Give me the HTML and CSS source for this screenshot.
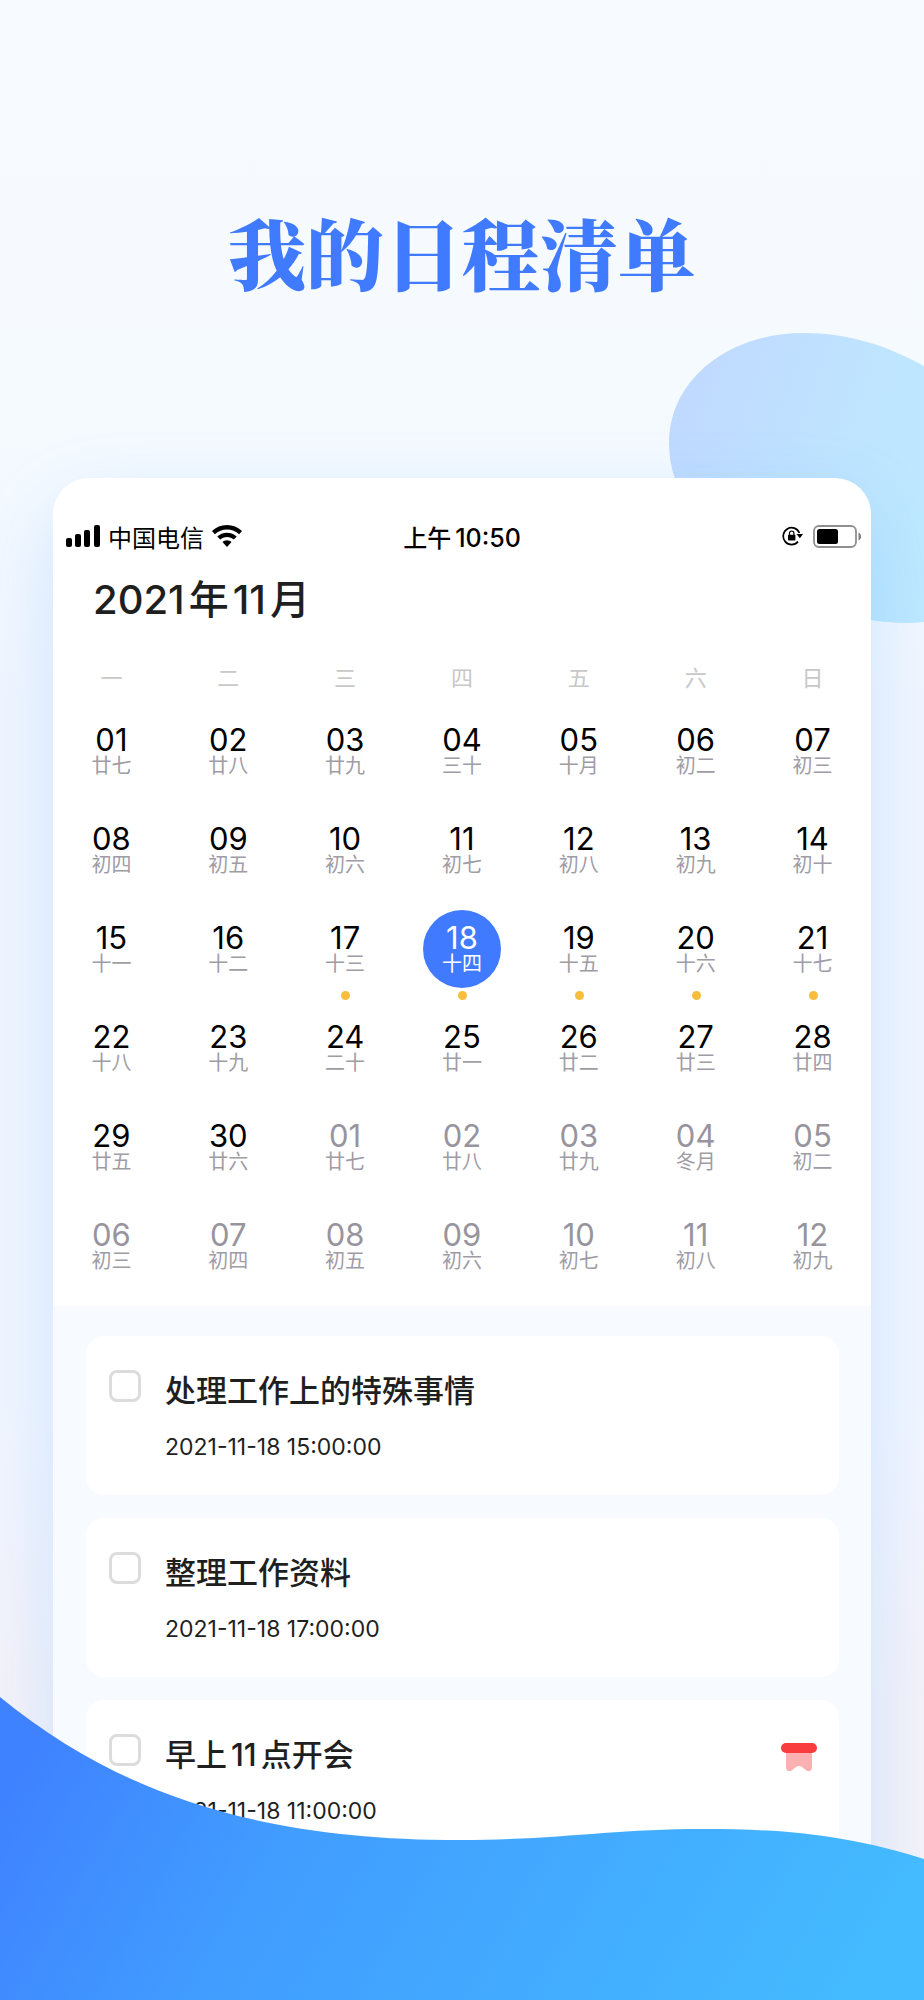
FILE: index.html
```html
<!DOCTYPE html>
<html lang="zh-CN">
<head>
<meta charset="utf-8">
<meta name="viewport" content="width=device-width, initial-scale=1">
<title>我的日程清单</title>
<link rel="stylesheet" href="styles.css">
</head>
<body>
<main class="page">
  <svg class="blob" viewBox="0 0 255 292" aria-hidden="true">
    <defs>
      <linearGradient id="blobFill" x1="0" y1="0.3" x2="1" y2="0.7">
        <stop offset="0" stop-color="#c0d9ff"/>
        <stop offset="0.600" stop-color="#bfe4ff"/>
        <stop offset="1" stop-color="#bee8ff"/>
      </linearGradient>
    </defs>
    <path fill="url(#blobFill)" d="M0 110C0 45 62 0 134 0C180 0 216 12 255 33V289C150 300 0 215 0 110Z"/>
  </svg>

  <h1 class="headline">我的日程清单</h1>

  <section class="phone">
    <div class="status">
      <div class="status-left">
        <svg width="34" height="22" viewBox="0 0 34 22" aria-hidden="true">
          <rect x="0" y="13" width="6" height="9" rx="2"/>
          <rect x="9" y="9" width="6" height="13" rx="2"/>
          <rect x="18" y="5" width="6" height="17" rx="2"/>
          <rect x="28" y="0" width="6" height="22" rx="2"/>
        </svg>
        <span>中国电信</span>
        <svg width="30" height="22" viewBox="0 0 30 22" aria-hidden="true">
          <path d="M15 0C20.800 0 26 2.200 30 6.100L27.200 9.300C23.900 6.200 19.600 4.400 15 4.400S6.100 6.200 2.800 9.300L0 6.100C4 2.200 9.200 0 15 0Z"/>
          <path d="M15 7.700C18.700 7.700 22.100 9.100 24.700 11.500L21.800 14.600C20 13 17.600 12 15 12S10 13 8.200 14.600L5.300 11.500C7.900 9.100 11.300 7.700 15 7.700Z"/>
          <path d="M15 15.300C16.700 15.300 18.300 16 19.500 17.100L15 22L10.500 17.100C11.700 16 13.300 15.300 15 15.300Z"/>
        </svg>
      </div>
      <time class="clock"><span>上午</span><span class="digits">10:50</span></time>
      <div class="status-right">
        <svg width="21" height="20" viewBox="0 0 21 20" aria-hidden="true">
          <path d="M17.400 7A8.400 8.400 0 1 0 16 15.600" fill="none" stroke="#000" stroke-width="1.700"/>
          <path d="M14.500 8H21L17.900 12.200Z"/>
          <rect x="6" y="8.800" width="7.400" height="5.800" rx="0.800"/>
          <path d="M7.500 9V7.200a2.200 2.200 0 0 1 4.400 0V9" fill="none" stroke="#000" stroke-width="1.200"/>
        </svg>
        <svg width="48" height="23" viewBox="0 0 48 23" aria-hidden="true">
          <rect x="1" y="1" width="42" height="21" rx="5" fill="none" stroke="#8f8f8f" stroke-width="1.800"/>
          <rect x="4" y="4" width="21" height="15" rx="2.500"/>
          <path d="M45.500 7.500C49 9 49 14 45.500 15.500Z" fill="#808080"/>
        </svg>
      </div>
    </div>

    <h2 class="month">2021<span class="digits">年</span>11<span class="digits">月</span></h2>

    <table class="calendar">
      <thead>
        <tr><th>一</th><th>二</th><th>三</th><th>四</th><th>五</th><th>六</th><th>日</th></tr>
      </thead>
      <tbody>
        <tr>
          <td><button class="day"><b>01</b><small>廿七</small></button></td>
          <td><button class="day"><b>02</b><small>廿八</small></button></td>
          <td><button class="day"><b>03</b><small>廿九</small></button></td>
          <td><button class="day"><b>04</b><small>三十</small></button></td>
          <td><button class="day"><b>05</b><small>十月</small></button></td>
          <td><button class="day"><b>06</b><small>初二</small></button></td>
          <td><button class="day"><b>07</b><small>初三</small></button></td>
        </tr>
        <tr>
          <td><button class="day"><b>08</b><small>初四</small></button></td>
          <td><button class="day"><b>09</b><small>初五</small></button></td>
          <td><button class="day"><b>10</b><small>初六</small></button></td>
          <td><button class="day"><b>11</b><small>初七</small></button></td>
          <td><button class="day"><b>12</b><small>初八</small></button></td>
          <td><button class="day"><b>13</b><small>初九</small></button></td>
          <td><button class="day"><b>14</b><small>初十</small></button></td>
        </tr>
        <tr>
          <td><button class="day"><b>15</b><small>十一</small></button></td>
          <td><button class="day"><b>16</b><small>十二</small></button></td>
          <td><button class="day marked"><b>17</b><small>十三</small></button></td>
          <td><button class="day marked selected" aria-pressed="true"><b>18</b><small>十四</small></button></td>
          <td><button class="day marked"><b>19</b><small>十五</small></button></td>
          <td><button class="day marked"><b>20</b><small>十六</small></button></td>
          <td><button class="day marked"><b>21</b><small>十七</small></button></td>
        </tr>
        <tr>
          <td><button class="day"><b>22</b><small>十八</small></button></td>
          <td><button class="day"><b>23</b><small>十九</small></button></td>
          <td><button class="day"><b>24</b><small>二十</small></button></td>
          <td><button class="day"><b>25</b><small>廿一</small></button></td>
          <td><button class="day"><b>26</b><small>廿二</small></button></td>
          <td><button class="day"><b>27</b><small>廿三</small></button></td>
          <td><button class="day"><b>28</b><small>廿四</small></button></td>
        </tr>
        <tr>
          <td><button class="day"><b>29</b><small>廿五</small></button></td>
          <td><button class="day"><b>30</b><small>廿六</small></button></td>
          <td><button class="day outside"><b>01</b><small>廿七</small></button></td>
          <td><button class="day outside"><b>02</b><small>廿八</small></button></td>
          <td><button class="day outside"><b>03</b><small>廿九</small></button></td>
          <td><button class="day outside"><b>04</b><small>冬月</small></button></td>
          <td><button class="day outside"><b>05</b><small>初二</small></button></td>
        </tr>
        <tr>
          <td><button class="day outside"><b>06</b><small>初三</small></button></td>
          <td><button class="day outside"><b>07</b><small>初四</small></button></td>
          <td><button class="day outside"><b>08</b><small>初五</small></button></td>
          <td><button class="day outside"><b>09</b><small>初六</small></button></td>
          <td><button class="day outside"><b>10</b><small>初七</small></button></td>
          <td><button class="day outside"><b>11</b><small>初八</small></button></td>
          <td><button class="day outside"><b>12</b><small>初九</small></button></td>
        </tr>
      </tbody>
    </table>

    <ul class="tasks">
      <li class="task">
        <input class="check" type="checkbox" id="task1">
        <div class="task-body">
          <label class="task-title" for="task1">处理工作上的特殊事情</label>
          <time class="task-time">2021-11-18 15:00:00</time>
        </div>
      </li>
      <li class="task">
        <input class="check" type="checkbox" id="task2">
        <div class="task-body">
          <label class="task-title" for="task2">整理工作资料</label>
          <time class="task-time">2021-11-18 17:00:00</time>
        </div>
      </li>
      <li class="task">
        <input class="check" type="checkbox" id="task3">
        <div class="task-body">
          <label class="task-title" for="task3">早上<span class="digits">11</span>点开会</label>
          <time class="task-time">2021-11-18 11:00:00</time>
        </div>
        <svg class="pin" width="36" height="29" viewBox="0 0 36 29" aria-hidden="true">
          <path fill="#fbb0b2" d="M5 8H31V24.500C31 28 27.500 29.500 25 27.300L21 24C19 22.500 17 22.500 15 24L11 27.300C8.500 29.500 5 28 5 24.500Z"/>
          <rect width="36" height="10" rx="5" fill="#f93c3d"/>
        </svg>
      </li>
    </ul>
  </section>

  <svg class="wave" viewBox="0 0 924 303" preserveAspectRatio="none" aria-hidden="true">
    <defs>
      <linearGradient id="waveFill" gradientUnits="userSpaceOnUse" x1="60" y1="0" x2="800" y2="420">
        <stop offset="0" stop-color="#3f82ff"/>
        <stop offset="0.300" stop-color="#419cff"/>
        <stop offset="1" stop-color="#44bbff"/>
      </linearGradient>
    </defs>
    <path fill="url(#waveFill)" d="M0 0C120 98 260 143 460 143C560 143 610 132 704 132C790 132 850 139 924 162V303H0Z"/>
  </svg>
</main>
</body>
</html>
```
FILE: styles.css
```css
* {
  box-sizing: border-box;
}

body {
  margin: 0;
  font-family: Inter, "Noto Sans CJK SC", sans-serif;
  color: #1f1f1f;
}

.page {
  position: relative;
  min-height: 100vh;
  padding: 191px 53px 0;
  overflow: hidden;
  background: linear-gradient(#f7fbff 0, #f5faff 400px, #f2f6ff 700px, #f2f6ff 1400px, #f5f2f9 1700px);
}

.blob {
  position: absolute;
  top: 333px;
  right: 0;
  width: 255px;
  height: 292px;
}

.headline {
  margin: 0;
  font-family: "Noto Serif CJK SC", "Source Han Serif SC", "Noto Sans CJK SC", serif;
  font-size: 78px;
  font-weight: 900;
  line-height: 120px;
  text-align: center;
  color: #407bff;
}

.phone {
  position: relative;
  margin-top: 167px;
  overflow: hidden;
  border-radius: 36px 36px 0 0;
  background: #fff;
  box-shadow: 0 30px 80px rgba(50, 160, 255, 0.2);
}

.status {
  display: grid;
  grid-template-columns: 1fr auto 1fr;
  align-items: center;
  height: 40px;
  margin-top: 38px;
  padding: 0 10px;
  font-size: 24px;
  color: #000;
}

.status-left,
.status-right {
  display: flex;
  align-items: center;
  gap: 8px;
}

.status-left {
  padding-left: 3px;
}

.status-right {
  justify-content: flex-end;
  gap: 10px;
}

.clock {
  font-weight: 500;
}

.digits {
  margin: 0 4px;
}

.clock .digits {
  margin-right: 0;
  font-size: 25px;
}

.month {
  margin: 0;
  padding: 16px 40px 0;
  font-size: 40px;
  font-weight: 500;
  line-height: 56px;
}

.calendar {
  width: 100%;
  table-layout: fixed;
  border-collapse: collapse;
}

.calendar th {
  height: 84px;
  padding: 12px 0 0;
  font-size: 22px;
  font-weight: 400;
  color: #c8c8c8;
}

.calendar td {
  height: 99px;
  padding: 0;
  text-align: center;
  vertical-align: top;
}

.day {
  position: relative;
  display: inline-flex;
  flex-direction: column;
  align-items: center;
  width: 78px;
  height: 78px;
  padding: 12px 0 0;
  border: 0;
  border-radius: 50%;
  background: none;
  font-family: inherit;
  color: #000;
}

.day b {
  font-size: 31px;
  font-weight: 400;
  line-height: 32px;
}

.day small {
  font-size: 20px;
  font-weight: 400;
  line-height: 20px;
  color: #a09ca6;
}

.day.outside {
  color: #98949e;
}

.day.selected,
.day.selected small {
  color: #fff;
}

.day.selected {
  background: #407bff;
}

.day.marked::after {
  content: "";
  position: absolute;
  bottom: -12px;
  left: 50%;
  width: 9px;
  height: 9px;
  margin-left: -4px;
  border-radius: 50%;
  background: #f8bd3c;
}

.tasks {
  display: flex;
  flex-direction: column;
  gap: 23px;
  margin: 0;
  padding: 30px 32px 141px 33px;
  list-style: none;
  background: #f7faff;
}

.task {
  display: flex;
  align-items: flex-start;
  gap: 24px;
  height: 159px;
  padding: 34px 22px 0 23px;
  border-radius: 18px;
  background: #fff;
}

.check {
  appearance: none;
  flex: none;
  width: 32px;
  height: 32px;
  margin: 0;
  border: 3px solid #dcdcdc;
  border-radius: 8px;
  background: #fff;
}

.check:checked {
  background: #407bff;
}

.task-body {
  display: flex;
  flex: 1;
  flex-direction: column;
  gap: 16px;
  padding-top: 1px;
}

.task-title {
  font-size: 31px;
  font-weight: 500;
  line-height: 40px;
}

.task-time {
  font-size: 23px;
  font-weight: 400;
  line-height: 40px;
}

.pin {
  flex: none;
  margin-top: 9px;
}

.wave {
  position: absolute;
  bottom: 0;
  left: 0;
  width: 100%;
  height: 303px;
}
```
